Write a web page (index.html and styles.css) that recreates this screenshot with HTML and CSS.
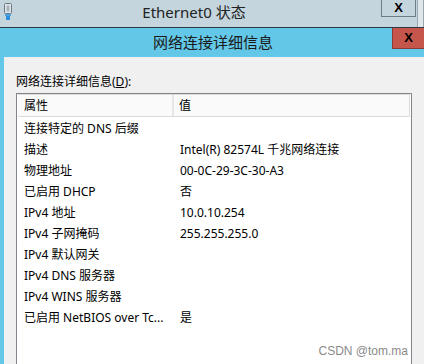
FILE: index.html
```html
<!DOCTYPE html>
<html lang="zh-CN">
<head>
    <meta charset="UTF-8">
    <meta name="viewport" content="width=device-width, initial-scale=1.0">
    <link rel="stylesheet" href="styles.css">
</head>
<body>
    <div class="back-window">
        <div class="back-titlebar">
            <svg class="app-icon" width="10" height="17" viewBox="0 0 10 17">
                <rect x="1.5" y="0.5" width="7" height="10" rx="1" fill="#dfe6ea" stroke="#6d7a82"/>
                <rect x="3.5" y="2.5" width="3" height="6" fill="#a9b5bc"/>
                <rect x="2" y="11" width="6" height="2" fill="#4aa3e0"/>
                <rect x="3" y="13" width="4" height="4" fill="#2f8fd8"/>
            </svg>
            <span class="back-title">Ethernet0 状态</span>
            <div class="back-close">X</div>
            <div class="back-edge"></div>
        </div>
    </div>

    <div class="dialog">
        <div class="dialog-titlebar">
            <span class="dialog-title">网络连接详细信息</span>
            <div class="dialog-close">X</div>
        </div>
        <div class="dialog-body">
            <div class="list-label">网络连接详细信息(<u>D</u>):</div>
            <div class="listview">
                <div class="list-header">
                    <div class="col-prop">属性</div>
                    <div class="col-val">值</div>
                </div>
                <div class="list-rows">
                    <div class="row"><span>连接特定的 DNS 后缀</span><span></span></div>
                    <div class="row"><span>描述</span><span>Intel(R) 82574L 千兆网络连接</span></div>
                    <div class="row"><span>物理地址</span><span>00-0C-29-3C-30-A3</span></div>
                    <div class="row"><span>已启用 DHCP</span><span>否</span></div>
                    <div class="row"><span>IPv4 地址</span><span>10.0.10.254</span></div>
                    <div class="row"><span>IPv4 子网掩码</span><span>255.255.255.0</span></div>
                    <div class="row"><span>IPv4 默认网关</span><span></span></div>
                    <div class="row"><span>IPv4 DNS 服务器</span><span></span></div>
                    <div class="row"><span>IPv4 WINS 服务器</span><span></span></div>
                    <div class="row"><span>已启用 NetBIOS over Tc...</span><span>是</span></div>
                </div>
                <div class="watermark">CSDN @tom.ma</div>
            </div>
        </div>
    </div>
</body>
</html>
```

FILE: styles.css
```css
* {
    box-sizing: border-box;
}
body {
    margin: 0;
    width: 424px;
    height: 364px;
    overflow: hidden;
    font-family: "Noto Sans", "Noto Sans CJK SC", sans-serif;
    font-size: 12px;
    color: #000;
    background-color: #f0f0f0;
}
.back-titlebar {
    height: 28px;
    display: flex;
    align-items: flex-start;
    background-color: #c4d5dd;
    border-bottom: 1px solid #2e3a42;
}
.app-icon {
    margin: 3px 0 0 3px;
}
.back-title {
    flex: 1;
    text-align: center;
    font-size: 15px;
    line-height: 25px;
    color: #222;
    padding-right: 6px;
}
.back-close {
    width: 35px;
    height: 17px;
    border: 1px solid #707b82;
    border-top: none;
    font: bold 13px/16px "Liberation Sans", sans-serif;
    text-align: center;
}
.back-edge {
    width: 7px;
    height: 27px;
    border-left: 1px solid #9aa7ae;
    border-right: 1px solid #9aa7ae;
    margin-left: 1px;
    background-color: #dfe7eb;
}
.dialog {
    border-left: 4px solid #63c8e8;
    height: 336px;
}
.dialog-titlebar {
    height: 29px;
    margin-left: -4px;
    display: flex;
    align-items: flex-start;
    background-color: #63c8e8;
}
.dialog-title {
    flex: 1;
    text-align: center;
    font-size: 15px;
    line-height: 29px;
    padding-left: 34px;
    color: #1a1a1a;
}
.dialog-close {
    width: 32px;
    height: 21px;
    background-color: #c6554c;
    border: 1px solid #8c3a34;
    border-right: none;
    border-top: none;
    font: bold 13px/20px "Liberation Sans", sans-serif;
    text-align: center;
}
.dialog-body {
    padding: 17px 12px 0 12px;
}
.list-label {
    line-height: 16px;
    margin-bottom: 3px;
}
.listview {
    position: relative;
    height: 271px;
    background-color: #fff;
    border: 1px solid #7f858b;
    border-bottom: none;
}
.list-header {
    display: grid;
    grid-template-columns: 156px 1fr;
    height: 23px;
    margin: 0 1px;
    background-color: #fafafa;
    border: 1px solid #dcdcdc;
    border-left: none;
    line-height: 21px;
}
.col-prop {
    padding-left: 6px;
    border-right: 2px solid #e6e6e6;
}
.col-val {
    padding-left: 5px;
}
.list-rows {
    padding-top: 1px;
}
.row {
    display: grid;
    grid-template-columns: 156px 1fr;
    height: 21px;
    line-height: 21px;
    padding-left: 7px;
    white-space: nowrap;
}
.watermark {
    position: absolute;
    right: 3px;
    bottom: 6px;
    font: 12px "Liberation Sans", sans-serif;
    line-height: 14px;
    color: #8a8a8a;
}
```
